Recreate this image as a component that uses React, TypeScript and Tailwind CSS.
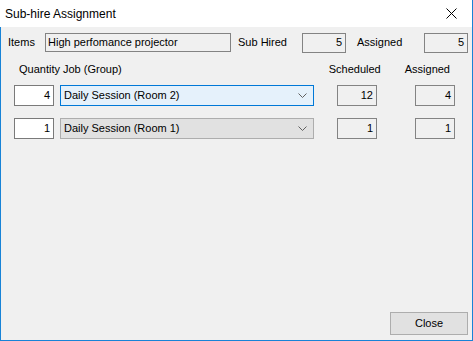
import React from 'react';

const font = { fontFamily: '"Liberation Sans", Arial, sans-serif' };

function ReadBox({ value, className }: { value: string; className: string }) {
  return (
    <div className={`h-[20px] border border-[#838383] bg-[#f0f0f0] flex items-center justify-end pr-[3px] text-[11px] text-black ${className}`}>
      {value}
    </div>
  );
}

function Chevron() {
  return (
    <svg width="9" height="5" viewBox="0 0 9 5" className="shrink-0">
      <path d="M0.5 0.5 L4.5 4.5 L8.5 0.5" fill="none" stroke="#606060" strokeWidth="1" />
    </svg>
  );
}

function JobRow({ qty, job, scheduled, assigned, active }: { qty: string; job: string; scheduled: string; assigned: string; active?: boolean }) {
  return (
    <div className="flex items-center h-[21px]">
      <div className="ml-[13px] w-[40px] h-[21px] border border-[#7a7a7a] bg-white flex items-center justify-end pr-[3px] text-[11px]">
        {qty}
      </div>
      <div
        className={`ml-[6px] w-[254px] h-[21px] border flex items-center justify-between pl-[3px] pr-[6px] text-[11px] ${
          active ? 'border-[#0078d7] bg-[#e5f1fb]' : 'border-[#adadad] bg-[#e1e1e1]'
        }`}
      >
        <span>{job}</span>
        <Chevron />
      </div>
      <ReadBox value={scheduled} className="ml-[23px] w-[40px] h-[21px]" />
      <ReadBox value={assigned} className="ml-[38px] w-[40px] h-[21px]" />
    </div>
  );
}

export default function App() {
  return (
    <div className="w-[473px] h-[341px] flex flex-col bg-[#f0f0f0] text-black" style={font}>
      {/* title bar */}
      <div className="h-[27px] bg-white border-r border-[#1883d7] flex items-center justify-between shrink-0">
        <span className="pl-[5px] text-[12px] text-black">Sub-hire Assignment</span>
        <svg width="11" height="11" viewBox="0 0 11 11" className="mr-[15px]">
          <path d="M0.5 0.5 L10.5 10.5 M10.5 0.5 L0.5 10.5" stroke="#000" strokeWidth="1" />
        </svg>
      </div>

      <div className="flex-1 flex flex-col border-l border-r border-b border-[#1883d7]">
        {/* items row */}
        <div className="flex items-center mt-[6px] h-[19px] text-[11px]">
          <span className="ml-[7px] w-[37px]">Items</span>
          <div className="w-[186px] h-[19px] border border-[#838383] bg-[#f0f0f0] flex items-center pl-[2px]">
            High perfomance projector
          </div>
          <span className="ml-[7px] w-[64px]">Sub Hired</span>
          <ReadBox value="5" className="w-[44px] h-[19px]" />
          <span className="ml-[11px] w-[67px]">Assigned</span>
          <ReadBox value="5" className="w-[44px] h-[19px]" />
        </div>

        {/* column headers */}
        <div className="flex items-center mt-[11px] h-[12px] text-[11px]">
          <span className="ml-[18px] w-[44px]">Quantity</span>
          <span>Job (Group)</span>
          <span className="ml-auto">Scheduled</span>
          <span className="ml-[24px] mr-[22px]">Assigned</span>
        </div>

        <div className="flex flex-col gap-[12px] mt-[10px]">
          <JobRow qty="4" job="Daily Session (Room 2)" scheduled="12" assigned="4" active />
          <JobRow qty="1" job="Daily Session (Room 1)" scheduled="1" assigned="1" />
        </div>

        <div className="flex-1" />
        <div className="flex justify-end pr-[4px] pb-[5px]">
          <button className="w-[78px] h-[23px] border border-[#adadad] bg-[#e1e1e1] text-[11px] text-black">
            Close
          </button>
        </div>
      </div>
    </div>
  );
}
